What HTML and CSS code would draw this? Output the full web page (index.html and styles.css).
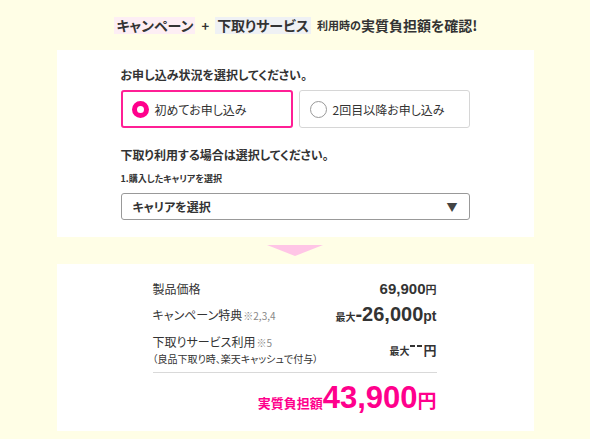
FILE: index.html
```html
<!DOCTYPE html>
<html lang="ja">
<head>
<meta charset="utf-8">
<link rel="stylesheet" href="styles.css">
</head>
<body>
<div class="wrap">
  <h1 class="head">
    <span class="tag tag-pink">キャンペーン</span>
    <span class="plus">+</span>
    <span class="tag tag-gray">下取りサービス</span>
    <span class="small">利用時の</span><span class="big">実質負担額を確認!</span>
  </h1>

  <section class="panel panel-form">
    <p class="q">お申し込み状況を選択してください。</p>
    <div class="radios">
      <label class="radio is-on"><span class="dot"></span>初めてお申し込み</label>
      <label class="radio"><span class="dot"></span>2回目以降お申し込み</label>
    </div>
    <p class="q q2">下取り利用する場合は選択してください。</p>
    <p class="sub">1.購入したキャリアを選択</p>
    <div class="select"><span>キャリアを選択</span><span class="caret">▼</span></div>
  </section>

  <div class="arrow-row"><div class="arrow"></div></div>

  <section class="panel panel-result">
    <div class="row r1">
      <span class="lab">製品価格</span>
      <span class="val"><span class="n15">69,900</span><span class="u11">円</span></span>
    </div>
    <div class="row r2">
      <span class="lab">キャンペーン特典<span class="note">※2,3,4</span></span>
      <span class="val"><span class="max">最大</span><span class="n20">-26,000</span><span class="pt">pt</span></span>
    </div>
    <div class="row r3">
      <span class="lab">下取りサービス利用<span class="note">※5</span><span class="lab-sub">（良品下取り時、楽天キャッシュで付与）</span></span>
      <span class="val"><span class="max">最大</span><span class="dashes"><span class="dash"></span><span class="dash"></span></span><span class="u13">円</span></span>
    </div>
    <div class="row total">
      <span class="tlab">実質負担額</span><span class="n30">43,900</span><span class="u19">円</span>
    </div>
  </section>
</div>
</body>
</html>
```

FILE: styles.css
```css
* { box-sizing: border-box; }
html, body { margin: 0; padding: 0; }
body {
  background: #fffee6;
  font-family: "Noto Sans CJK JP", "Noto Sans", sans-serif;
  color: #333;
  font-feature-settings: "palt";
  width: 590px;
  height: 439px;
  overflow: hidden;
}
.wrap { width: 477px; margin: 0 auto; }

.head {
  margin: 0;
  height: 50px;
  display: flex;
  align-items: center;
  justify-content: center;
  font-size: 14px;
  font-weight: 700;
  padding-left: 2px;
}
.tag { padding: 0 2px; line-height: 17px; font-size: 14px; }
.tag-pink { background: #fdeef4; }
.tag-gray { background: #eff1f4; }
.plus { margin: 0 6px; font-size: 13px; }
.small { font-size: 11px; margin-left: 6px; }
.big { font-size: 14px; }

.panel { background: #fff; }
.panel-form { padding: 16px 64px 17px; }
.q { margin: 0; font-size: 12px; font-weight: 700; line-height: 18px; }
.q2 { margin-top: 18px; }
.radios { display: flex; gap: 6px; margin-top: 6px; }
.radio {
  flex: 1;
  height: 38px;
  border: 1px solid #d6d6d6;
  border-radius: 3px;
  display: flex;
  align-items: center;
  padding-left: 10px;
  font-size: 12px;
  gap: 6px;
}
.radio .dot {
  width: 17px; height: 17px; border-radius: 50%;
  border: 1px solid #999;
  background: #fff;
  flex: none;
}
.radio.is-on { border: 2px solid #ff1f95; padding-left: 9px; }
.radio.is-on .dot { border: 5px solid #ff008c; background: #fff; }

.sub { margin: 8px 0 0; font-size: 9px; font-weight: 700; line-height: 14px; }
.select {
  margin-top: 7px;
  height: 27px;
  border: 1px solid #999;
  border-radius: 3px;
  display: flex;
  align-items: center;
  justify-content: space-between;
  padding: 0 11px 0 11px;
  font-size: 12px;
  font-weight: 700;
}
.caret { font-size: 11px; color: #444; }

.arrow-row { height: 27px; display: flex; justify-content: center; align-items: center; }
.arrow {
  width: 0; height: 0;
  border-left: 28px solid transparent;
  border-right: 28px solid transparent;
  border-top: 11px solid #ffc5e6;
}

.panel-result { padding: 14px 97px 0 96px; height: 167px; }
.row { display: flex; justify-content: space-between; align-items: center; }
.lab { font-size: 12px; }
.note { font-size: 10px; color: #888; margin-left: 1px; }
.lab-sub { display: block; font-size: 10px; line-height: 16px; }
.r1 { height: 20px; }
.r2 { height: 32px; }
.r3 { height: 34px; margin-top: 3px; line-height: 16px; }
.r3 .lab { display: block; }
.val { font-weight: 700; display: flex; align-items: baseline; white-space: nowrap; }
.n15 { font-family: "Liberation Sans", Arial, sans-serif; font-size: 15px; }
.u11 { font-size: 11px; }
.max { font-size: 10px; }
.n20 { font-family: "Liberation Sans", Arial, sans-serif; font-size: 20px; }
.pt { font-family: "Liberation Sans", Arial, sans-serif; font-size: 14px; }
.dashes { display: inline-flex; gap: 2px; align-self: flex-start; padding-top: 3px; margin: 0 1px; }
.dash { width: 5px; height: 2px; background: #333; }
.u13 { font-size: 13px; }
.total {
  margin-top: 5px;
  border-top: 1px solid #d9d9d9;
  justify-content: flex-end;
  align-items: baseline;
  color: #ff008c;
  font-weight: 700;
  padding-top: 7px;
  line-height: 36px;
}
.tlab { font-size: 13px; }
.n30 { font-family: "Liberation Sans", Arial, sans-serif; font-size: 31px; }
.u19 { font-size: 19px; }
```
